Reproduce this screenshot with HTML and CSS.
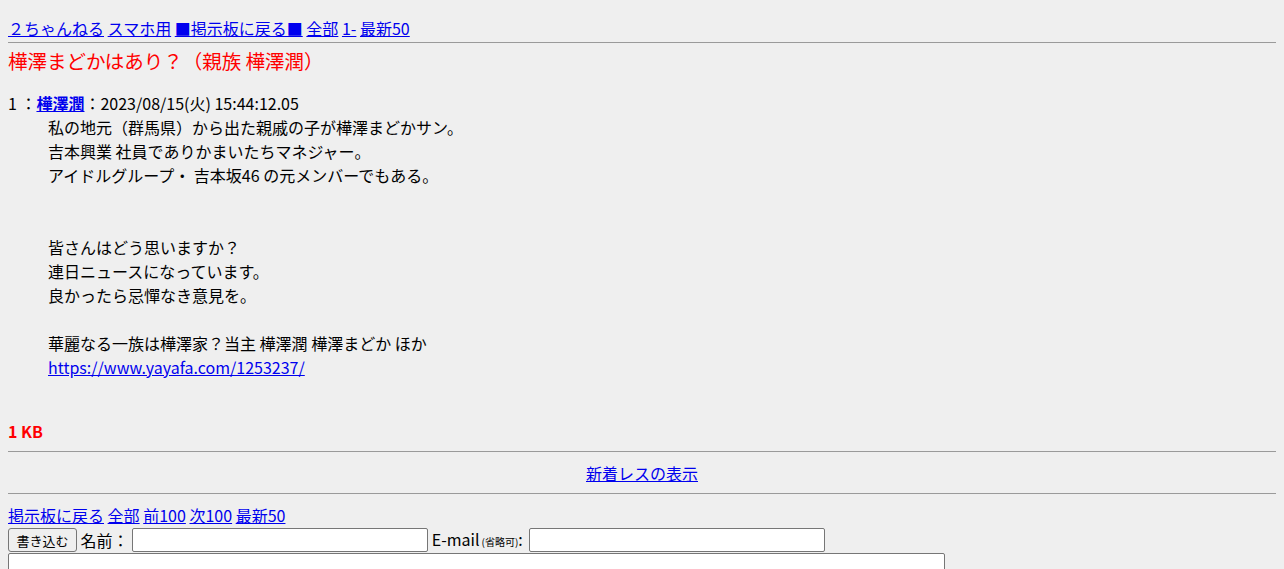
FILE: index.html
```html
<!DOCTYPE html>
<html lang="ja">
<head>
<meta charset="utf-8">
<title>樺澤まどかはあり？（親族 樺澤潤）</title>
<link rel="stylesheet" href="styles.css">
</head>
<body>
<div class="menu">
  <a href="#">２ちゃんねる</a> <a href="#">スマホ用</a> <a href="#">■掲示板に戻る■</a> <a href="#">全部</a> <a href="#">1-</a> <a href="#">最新50</a>
</div>
<hr class="rule rule-top">
<h1 class="title">樺澤まどかはあり？（親族 樺澤潤）</h1>
<dl class="thread">
  <dt class="post-head">1 ：<a class="name" href="#">樺澤潤</a>：2023/08/15(火) 15:44:12.05</dt>
  <dd class="post-body">私の地元（群馬県）から出た親戚の子が樺澤まどかサン。<br>吉本興業 社員でありかまいたちマネジャー。<br>アイドルグループ・ 吉本坂46 の元メンバーでもある。<br><br><br>皆さんはどう思いますか？<br>連日ニュースになっています。<br>良かったら忌憚なき意見を。<br><br>華麗なる一族は樺澤家？当主 樺澤潤 樺澤まどか ほか<br><a href="#">https://www.yayafa.com/1253237/</a></dd>
</dl>
<div class="size"><b>1 KB</b></div>
<hr class="rule">
<div class="newres"><a href="#">新着レスの表示</a></div>
<hr class="rule">
<div class="nav">
  <a href="#">掲示板に戻る</a> <a href="#">全部</a> <a href="#">前100</a> <a href="#">次100</a> <a href="#">最新50</a>
</div>
<form class="post-form">
  <div class="form-row">
    <button type="button" class="submit">書き込む</button>
    <span class="label">名前：</span>
    <input class="field" type="text">
    <span class="label">E-mail<span class="opt">(省略可)</span>:</span>
    <input class="field field-mail" type="text">
  </div>
  <textarea class="message"></textarea>
</form>
</body>
</html>
```
FILE: styles.css
```css
html, body {
  background: #efefef;
}
body {
  margin: 0;
  padding: 0 8px;
  font-family: "Noto Sans CJK JP", "Noto Sans", sans-serif;
  font-size: 16px;
  line-height: 24px;
  color: #000;
}
a {
  color: #0000ee;
  text-decoration: underline;
}
.menu {
  padding-top: 16px;
  height: 24px;
  white-space: nowrap;
}
.rule {
  display: block;
  height: 0;
  margin: 8px 0;
  border: 0;
  border-top: 1px solid #9a9a9a;
  border-bottom: 1px solid #eeeeee;
}
.rule-top {
  margin: 2px 0 0;
}
.title {
  margin: 3px 0 0;
  font-size: 19.5px;
  line-height: 28px;
  font-weight: normal;
  color: #ff0000;
}
.thread {
  margin: 16px 0 0;
}
.post-head {
  margin: 0;
}
.name {
  font-weight: bold;
}
.post-body {
  margin: 0 0 0 40px;
}
.size {
  margin-top: 40px;
  color: #ff0000;
}
.newres {
  text-align: center;
}
.nav {
  white-space: nowrap;
}
.post-form {
  margin: 1px 0 0;
}
.form-row {
  display: flex;
  align-items: center;
  gap: 3.6px;
  height: 24px;
}
.submit {
  box-sizing: border-box;
  height: 24px;
  width: 69px;
  padding: 0 6px;
  font-family: "Noto Sans CJK JP", sans-serif;
  font-size: 13px;
  color: #000;
  background: #efefef;
  border: 1px solid #767676;
  border-radius: 3px;
}
.label {
  white-space: nowrap;
}
.opt {
  font-size: 10px;
  margin-left: 2px;
}
.field {
  box-sizing: border-box;
  width: 296px;
  height: 24px;
  margin: 0;
  padding: 1px 2px;
  background: #fff;
  border: 1px solid #767676;
  border-radius: 2px;
}
.field-mail {
  margin-left: 3px;
}
.message {
  display: block;
  box-sizing: border-box;
  width: 937px;
  height: 120px;
  margin: 1px 0 0;
  background: #fff;
  border: 1px solid #767676;
  border-radius: 2px;
}
```
